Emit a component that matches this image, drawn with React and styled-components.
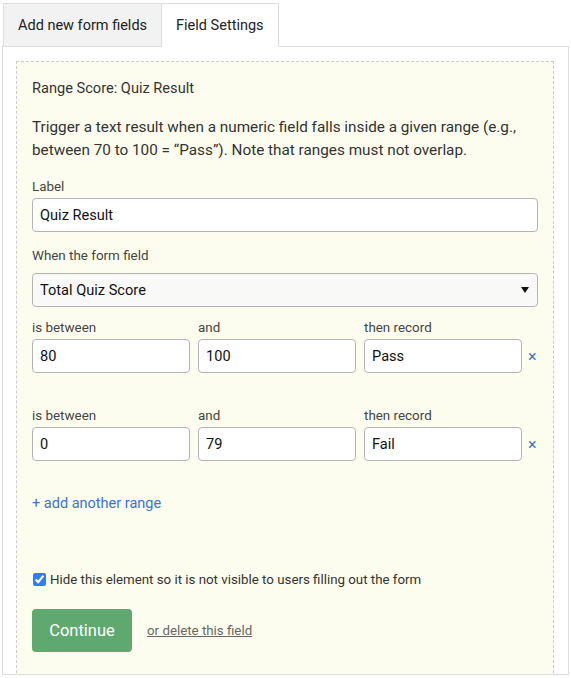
import styled, { createGlobalStyle } from "styled-components";

const GlobalStyle = createGlobalStyle`
  html, body {
    margin: 0;
    padding: 0;
    background: #fff;
  }
  body {
    font-family: Roboto, "Liberation Sans", sans-serif;
    color: #333;
  }
`;

const ranges = [
  { from: "80", to: "100", result: "Pass" },
  { from: "0", to: "79", result: "Fail" },
];

const App = () => {
  return (
    <>
      <GlobalStyle />
      <Page>
        <Tabs>
          <Tab>Add new form fields</Tab>
          <Tab active>Field Settings</Tab>
        </Tabs>
        <Panel>
          <Settings>
            <Title>Range Score: Quiz Result</Title>
            <Description>
              Trigger a text result when a numeric field falls inside a given
              range (e.g., between 70 to 100 = “Pass”). Note that ranges must
              not overlap.
            </Description>

            <FieldLabel top={13}>Label</FieldLabel>
            <TextInput defaultValue="Quiz Result" />

            <FieldLabel top={12} bottom={6}>
              When the form field
            </FieldLabel>
            <SelectWrap>
              <Select defaultValue="total">
                <option value="total">Total Quiz Score</option>
              </Select>
            </SelectWrap>

            {ranges.map((r, i) => (
              <RangeRow key={i} first={i === 0}>
                <FieldLabel>is between</FieldLabel>
                <FieldLabel>and</FieldLabel>
                <FieldLabel>then record</FieldLabel>
                <span />
                <TextInput defaultValue={r.from} />
                <TextInput defaultValue={r.to} />
                <TextInput defaultValue={r.result} />
                <Remove>×</Remove>
              </RangeRow>
            ))}

            <AddRange>+ add another range</AddRange>

            <CheckRow>
              <input type="checkbox" defaultChecked />
              Hide this element so it is not visible to users filling out the form
            </CheckRow>

            <Actions>
              <ContinueBtn>Continue</ContinueBtn>
              <DeleteLink>or delete this field</DeleteLink>
            </Actions>
          </Settings>
        </Panel>
      </Page>
    </>
  );
};
export default App;

const Page = styled.div`
  width: 567px;
  padding: 3px 0 0 2px;
`;

const Tabs = styled.div`
  display: flex;
  margin-left: 1px;
  position: relative;
  z-index: 1;
`;

const Tab = styled.div`
  height: 44px;
  box-sizing: border-box;
  display: flex;
  align-items: center;
  font-size: 14.5px;
  color: #222;
  border: 1px solid #ddd;
  border-bottom: ${({ active }) => (active ? "1px solid #fff" : "1px solid #ddd")};
  border-left: ${({ active }) => (active ? "none" : "1px solid #ddd")};
  background: ${({ active }) => (active ? "#fff" : "#f2f2f2")};
  padding: 0 14px;
  margin-bottom: -1px;
`;

const Panel = styled.div`
  border: 1px solid #ddd;
  height: 629px;
  box-sizing: border-box;
  padding: 14px 14px 0 13px;
  overflow: hidden;
`;

const Settings = styled.div`
  border: 1px dashed #ccc;
  background: #fdfdef;
  padding: 15px 15px 40px 15px;
  display: flex;
  flex-direction: column;
  font-size: 14px;
  line-height: 23px;
`;

const Title = styled.div`
  color: #333;
  font-size: 14.6px;
`;

const Description = styled.p`
  margin: 16px 0 0;
  color: #333;
  font-size: 15.3px;
`;

const FieldLabel = styled.label`
  display: block;
  color: #444;
  font-size: 13.4px;
  margin-top: ${({ top }) => top || 0}px;
  margin-bottom: ${({ bottom }) => bottom || 0}px;
`;

const TextInput = styled.input`
  box-sizing: border-box;
  width: 100%;
  height: 34px;
  border: 1px solid #b4b4b4;
  border-radius: 4px;
  background: #fff;
  padding: 0 7px;
  font-family: inherit;
  font-size: 14.6px;
  color: #111;
  outline: none;
`;

const SelectWrap = styled.div`
  position: relative;
  &::after {
    content: "";
    position: absolute;
    right: 9px;
    top: 14px;
    border-left: 4px solid transparent;
    border-right: 4px solid transparent;
    border-top: 6px solid #111;
    pointer-events: none;
  }
`;

const Select = styled.select`
  appearance: none;
  box-sizing: border-box;
  width: 100%;
  height: 34px;
  border: 1px solid #b4b4b4;
  border-radius: 4px;
  background: #f9f9f7;
  padding: 0 7px;
  font-family: inherit;
  font-size: 14.6px;
  color: #111;
  outline: none;
`;

const RangeRow = styled.div`
  display: grid;
  grid-template-columns: repeat(3, 158px) auto;
  column-gap: 8px;
  align-items: center;
  margin-top: ${({ first }) => (first ? 9 : 31)}px;
`;

const Remove = styled.span`
  color: #3a78d0;
  font-size: 16px;
  line-height: 1;
  padding-top: 2px;
  margin-left: -2px;
`;

const AddRange = styled.a`
  margin-top: 31px;
  color: #3a74cc;
  font-size: 14.5px;
  cursor: pointer;
`;

const CheckRow = styled.label`
  margin-top: 53px;
  display: flex;
  align-items: center;
  gap: 4px;
  color: #333;
  font-size: 13.3px;
  & input {
    margin: 0 0 0 1px;
    width: 13px;
    height: 13px;
    accent-color: #2d7ff9;
  }
`;

const Actions = styled.div`
  margin-top: 18px;
  display: flex;
  align-items: center;
  gap: 15px;
`;

const ContinueBtn = styled.button`
  width: 100px;
  height: 43px;
  border: none;
  border-radius: 4px;
  background: #5fa86f;
  color: #fff;
  font-family: inherit;
  font-size: 16.5px;
  cursor: pointer;
`;

const DeleteLink = styled.a`
  color: #666;
  font-size: 13.3px;
  text-decoration: underline;
  cursor: pointer;
`;
